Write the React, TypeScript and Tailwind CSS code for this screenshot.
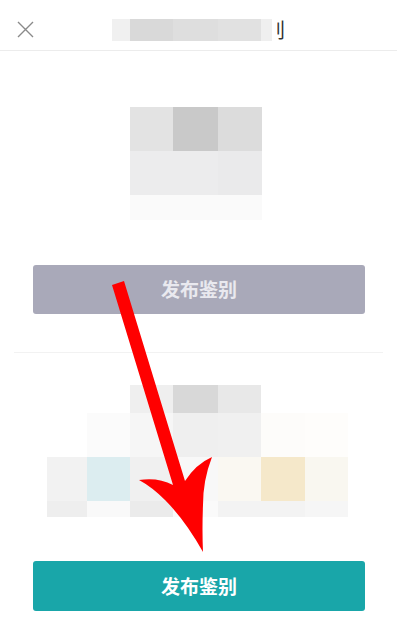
const FONT = "font-['Noto_Sans_CJK_SC','Noto_Sans',sans-serif]";

const topImage: string[][] = [
  ["bg-[#e3e3e3]", "bg-[#c9c9c9]", "bg-[#dcdcdc]"],
  ["bg-[#ececed]", "bg-[#ececed]", "bg-[#eaeaeb]"],
];

const bottomRows: { h: string; cells: string[] }[] = [
  {
    h: "h-[28px]",
    cells: ["bg-white", "bg-white", "bg-[#efefef]", "bg-[#d8d8d8]", "bg-[#e8e8e8]", "bg-white", "bg-white"],
  },
  {
    h: "h-[44px]",
    cells: ["bg-white", "bg-[#fbfbfb]", "bg-[#f6f6f6]", "bg-[#efefef]", "bg-[#f0f0f0]", "bg-[#fdfcfa]", "bg-[#fefdfb]"],
  },
  {
    h: "h-[44px]",
    cells: ["bg-[#f2f2f2]", "bg-[#dcedf0]", "bg-[#f0f0f0]", "bg-[#f8f8f8]", "bg-[#faf8f2]", "bg-[#f5e8ca]", "bg-[#f9f7f0]"],
  },
  {
    h: "h-[16px]",
    cells: ["bg-[#eeeeee]", "bg-[#f9f9f9]", "bg-[#ebebeb]", "bg-[#fafafa]", "bg-[#f3f3f3]", "bg-[#f3f3f3]", "bg-[#f6f6f6]"],
  },
];

function CloseIcon() {
  return (
    <svg width="17" height="17" viewBox="0 0 17 17" fill="none">
      <path d="M1 1 L16 16 M16 1 L1 16" stroke="#8a8a8a" strokeWidth="1.4" />
    </svg>
  );
}

function RedArrow() {
  return (
    <svg className="pointer-events-none absolute inset-0" width="397" height="637" viewBox="0 0 397 637">
      <path
        d="M112 285 L124 281 L185 481 Q196 464 212 457 Q203 480 203 505 Q202 530 203 552 Q185 520 165 500 Q152 487 139 480 Q158 477 173 485 Z"
        fill="#ff0000"
      />
    </svg>
  );
}

export default function App() {
  return (
    <div className={`relative h-[637px] w-full overflow-hidden bg-white ${FONT}`}>
      <header className="flex h-[51px] items-center border-b border-[#ececec] pt-[9px]">
        <div className="ml-[17px] flex w-[17px] items-center justify-center">
          <CloseIcon />
        </div>
        <div className="ml-[78px] flex items-center">
          <span className="order-2 ml-[-12px] text-[20px] leading-none text-[#333]">别</span>
          <div className="relative z-10 order-1 flex h-[24px]">
            <div className="my-[1px] w-[18px] bg-[#f0f0f0]" />
            <div className="my-[1px] w-[43px] bg-[#d9d9d9]" />
            <div className="my-[1px] w-[45px] bg-[#dedede]" />
            <div className="my-[1px] w-[43px] bg-[#e1e1e1]" />
            <div className="my-[1px] w-[11px] bg-[#efefef]" />
            <div className="w-[5px] bg-white" />
          </div>
        </div>
      </header>

      <section className="pt-[56px]">
        <div className="ml-[130px] w-[132px]">
          {topImage.map((row, i) => (
            <div key={i} className="grid h-[44px] grid-cols-[43px_45px_44px]">
              {row.map((c, j) => (
                <div key={j} className={c} />
              ))}
            </div>
          ))}
          <div className="h-[25px] bg-[#fafafa]" />
        </div>

        <button className="ml-[33px] mt-[45px] flex h-[49px] w-[332px] items-center justify-center rounded-[3px] bg-[#a9a9b9] text-[19px] font-bold text-[#e9e9ef]">
          发布鉴别
        </button>
      </section>

      <div className="mx-[14px] mt-[38px] h-px bg-[#f2f2f2]" />

      <section className="pt-[32px]">
        <div className="ml-[47px] w-[301px]">
          {bottomRows.map((row, i) => (
            <div key={i} className={`grid grid-cols-[40px_43px_43px_45px_43px_44px_43px] ${row.h}`}>
              {row.cells.map((c, j) => (
                <div key={j} className={c} />
              ))}
            </div>
          ))}
        </div>

        <button className="ml-[33px] mt-[44px] flex h-[50px] w-[332px] items-center justify-center rounded-[3px] bg-[#19a6a9] text-[19px] font-bold text-white">
          发布鉴别
        </button>
      </section>

      <RedArrow />
    </div>
  );
}
